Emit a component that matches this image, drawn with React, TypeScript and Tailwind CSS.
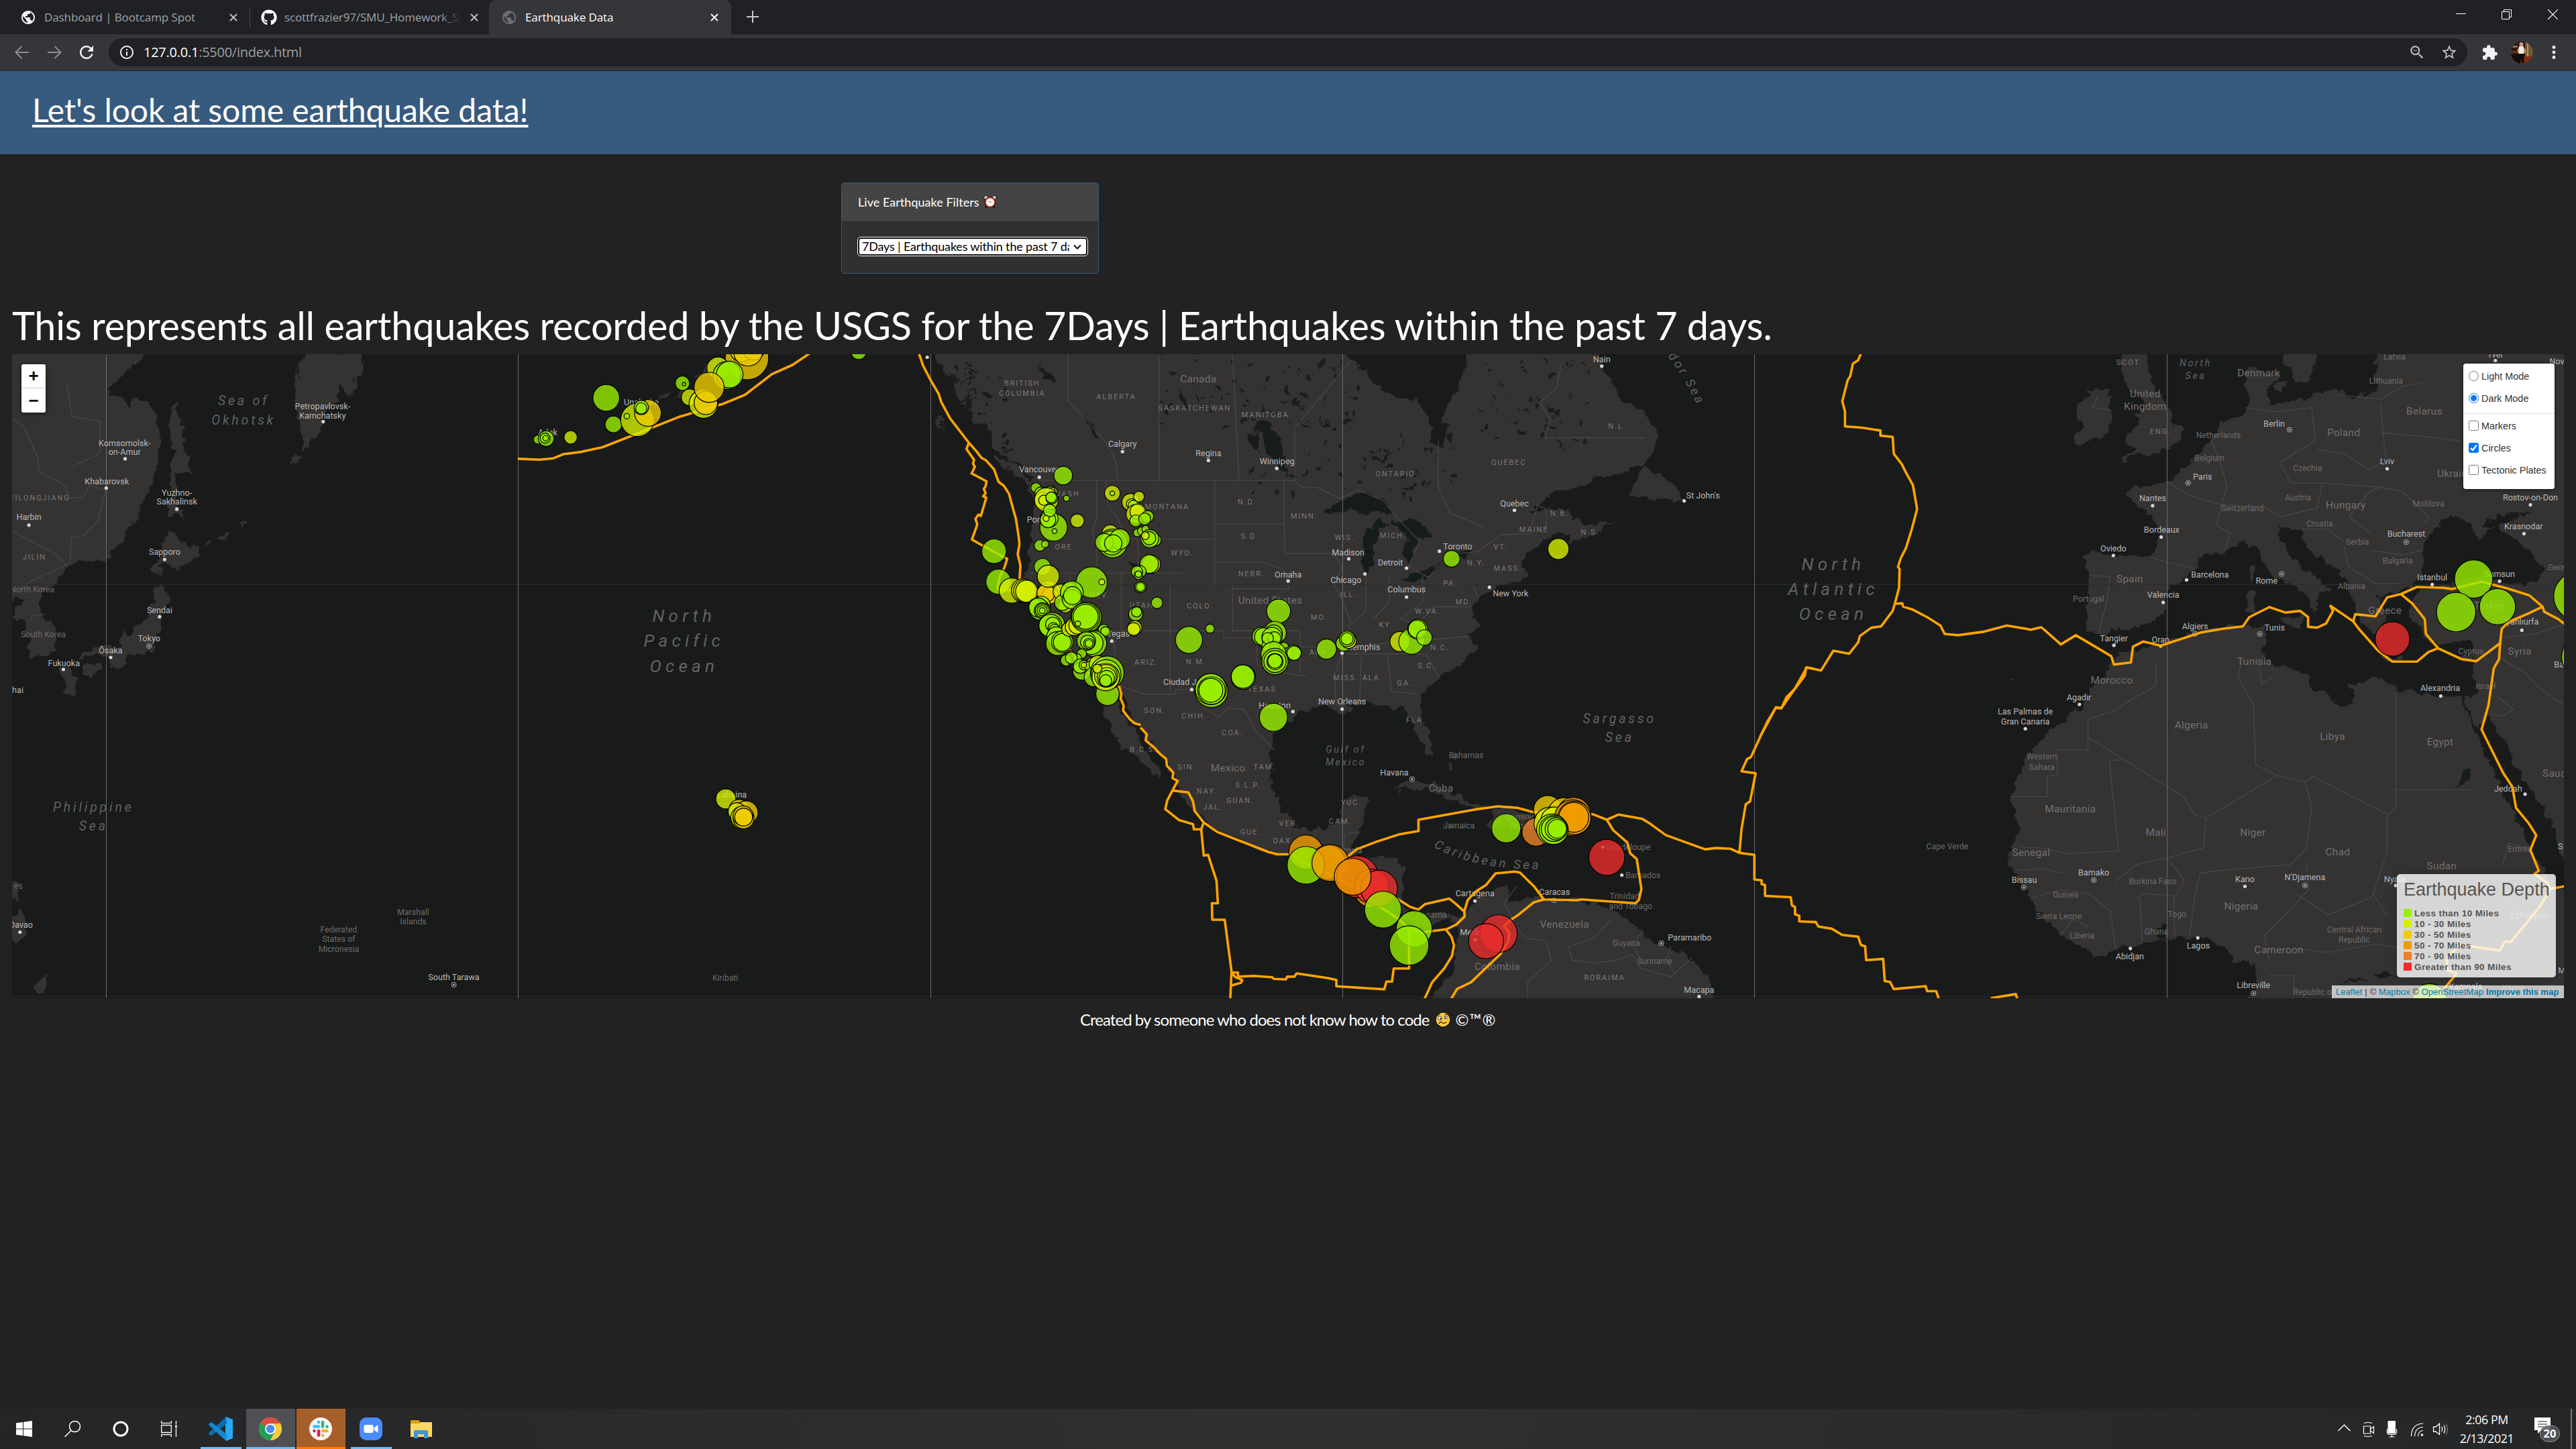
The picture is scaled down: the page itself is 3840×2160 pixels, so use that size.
import React from "react";
import { FaGithub } from "react-icons/fa";
import { MdExtension, MdStarBorder, MdZoomOut, MdInfoOutline, MdRefresh, MdPublic } from "react-icons/md";

/* ---------- map geometry ---------- */

// A sheet is a local drafting grid: origin and cell size in page units.
type Sheet = { x: number; y: number; sx: number; sy: number };
const PACIFIC: Sheet = { x: 0, y: 430, sx: 0.82908, sy: 0.6824 };
const WEST: Sheet = { x: 1280, y: 520, sx: 0.44643, sy: 0.35714 };
const CARIB: Sheet = { x: 1700, y: 860, sx: 0.63776, sy: 0.40816 };
const EAST: Sheet = { x: 2600, y: 520, sx: 0.79082, sy: 0.625 };
const AMERICA: Sheet = { x: 1300, y: 500, sx: 0.82908, sy: 0.66327 };

const pts = (s: Sheet, d: string) =>
  d
    .trim()
    .split(/\s+/)
    .map((p) => {
      const [a, b] = p.split(",").map(Number);
      return `${(s.x + a * s.sx).toFixed(1)},${(s.y + b * s.sy).toFixed(1)}`;
    })
    .join(" ");

const LAND: [Sheet, string][] = [
  // East Asia
  [PACIFIC, "-10,130 266,130 258,144 240,168 218,192 194,222 200,238 222,236 232,262 240,240 262,246 285,280 288,320 282,400 262,455 240,510 215,560 190,595 170,600 150,588 128,598 110,625 98,650 78,660 70,680 75,712 96,742 100,760 98,790 78,800 52,808 55,770 48,745 38,725 25,720 28,700 42,682 30,678 20,690 -10,700"],
  [PACIFIC, "315,250 326,290 330,345 345,412 320,402 316,460 334,508 318,490 302,498 308,440 306,400 312,350 300,300"],
  [PACIFIC, "305,525 335,565 355,562 362,578 330,598 325,616 295,598 285,606 291,630 274,616 276,600 290,590 292,560"],
  [PACIFIC, "278,652 296,648 305,682 288,712 288,766 276,775 276,795 250,800 232,805 214,832 200,828 200,806 170,800 140,812 148,795 182,784 212,780 222,745 232,756 262,722 275,690"],
  [PACIFIC, "104,826 125,828 138,852 132,888 114,880 118,850"],
  [PACIFIC, "148,838 152,822 180,815 184,828 158,850"],
  [PACIFIC, "552,140 536,170 530,200 534,270 546,356 574,310 580,276 604,250 606,212 634,238 640,190 656,180 648,140"],
  [PACIFIC, "524,386 534,364 540,368 530,382"],
  [PACIFIC, "20,1380 36,1352 48,1380 45,1410 30,1436 20,1420"],
  [PACIFIC, "20,1300 32,1296 34,1340 20,1336"],
  [PACIFIC, "66,1520 86,1495 78,1540 66,1535"],
  [PACIFIC, "701,210 712,235 706,222"],
  [PACIFIC, "372,562 376,552 380,556"],
  [PACIFIC, "392,545 410,528 416,532 398,546"],
  [PACIFIC, "430,520 442,503 444,510"],
  [PACIFIC, "1180,236 1205,226 1200,240"],
  [PACIFIC, "1208,236 1240,212 1232,232"],
  [PACIFIC, "1250,200 1280,152 1300,150 1282,186"],
  // North and Central America
  [AMERICA, "108,30 118,60 142,98 150,130 172,160 182,196 206,206 220,258 262,292 290,318 284,340 290,372 288,420 284,470 282,516 270,548 282,596 300,640 316,685 350,724 372,756 400,784 418,826 416,852 440,905 448,930 470,944 492,966 520,998 520,975 500,950 486,925 474,888 456,862 442,836 440,808 452,812 466,858 488,888 508,928 530,960 546,996 556,1040 590,1086 614,1112 672,1142 722,1166 760,1172 800,1192 842,1204 880,1244 908,1262 920,1290 948,1300 972,1322 988,1330 1012,1320 1040,1308 1056,1328 1050,1380 1048,1420 1024,1460 1004,1500 1515,1500 1502,1440 1480,1410 1452,1386 1402,1362 1374,1330 1350,1306 1320,1282 1300,1274 1262,1268 1220,1270 1196,1258 1160,1270 1140,1278 1146,1250 1138,1234 1112,1252 1090,1266 1080,1290 1056,1304 1020,1298 988,1312 968,1298 950,1266 956,1194 930,1172 880,1176 862,1164 864,1140 884,1098 892,1040 862,1036 848,1050 838,1096 796,1112 764,1108 740,1072 722,1026 716,960 722,892 750,866 780,840 814,832 850,852 868,838 846,828 900,826 948,838 966,852 978,890 994,940 1006,950 1008,930 998,880 984,840 988,806 1020,770 1056,740 1088,704 1074,670 1090,650 1078,620 1086,598 1112,570 1162,552 1180,540 1166,520 1180,490 1220,452 1256,442 1252,470 1280,458 1312,432 1340,414 1300,428 1260,412 1250,390 1210,392 1180,398 1220,360 1270,340 1310,316 1350,306 1388,290 1408,250 1412,220 1390,170 1350,150 1320,90 1300,30 1068,30 1068,70 1054,120 1026,180 1034,222 1024,252 1012,246 1002,196 978,142 936,136 910,112 888,80 866,60 850,30"],
  [AMERICA, "216,268 244,282 284,320 290,336 262,322 236,300"],
  [AMERICA, "112,180 132,190 130,214 118,206"],
  [AMERICA, "1392,286 1402,312 1440,330 1460,370 1442,378 1430,368 1404,366 1356,362 1370,338"],
  [CARIB, "590,778 604,760 646,744 700,764 746,800 776,826 812,834 782,846 728,818 700,800 680,778 632,768"],
  [CARIB, "806,908 826,870 826,842 868,846 918,880 940,900 900,912 866,904 836,916"],
  [CARIB, "706,906 730,904 740,918 720,918"],
  [CARIB, "726,660 736,640 740,664"],
  [CARIB, "720,684 732,680 734,700"],
  [CARIB, "598,784 612,786 606,800"],
  // Africa
  [EAST, "735,725 760,712 800,698 850,672 900,664 945,658 984,664 986,688 974,724 1000,754 1060,778 1070,806 1128,852 1150,832 1142,800 1196,784 1230,812 1290,822 1330,828 1352,832 1360,860 1384,930 1424,1040 1448,1100 1478,1180 1500,1230 1522,1270 1560,1300 1560,1560 950,1560 968,1500 966,1466 926,1462 910,1428 870,1402 800,1408 740,1420 704,1432 664,1452 606,1402 560,1354 530,1290 506,1240 498,1206 520,1150 514,1106 502,1070 524,1000 546,952 576,910 636,858 652,812 690,760 706,724"],
  // Arabia and the Levant
  [EAST, "1370,690 1380,820 1356,834 1374,886 1390,900 1400,870 1436,944 1456,1000 1490,1060 1516,1120 1534,1190 1560,1250 1560,600 1420,600"],
  // Europe and Anatolia
  [EAST, "1428,700 1404,686 1372,692 1336,700 1308,706 1284,690 1268,664 1256,620 1262,592 1290,572 1320,566 1360,548 1400,546 1440,562 1490,556 1510,530 1486,486 1450,450 1420,426 1450,404 1468,392 1440,396 1400,408 1392,424 1412,430 1388,452 1374,440 1372,420 1340,400 1316,410 1290,440 1276,486 1280,540 1254,566 1218,584 1192,592 1212,640 1196,690 1174,664 1150,620 1144,580 1136,556 1110,524 1070,484 1044,434 1010,424 1008,446 1030,500 1054,520 1098,566 1108,580 1084,574 1084,600 1070,632 1066,592 1030,560 1000,548 972,490 944,456 904,488 852,494 850,530 806,568 792,590 796,616 770,650 738,666 692,674 680,684 642,670 646,620 652,540 638,500 650,484 720,496 764,494 784,462 780,420 750,384 716,342 752,326 800,318 822,290 850,260 880,216 900,176 946,156 954,130 944,90 952,44 984,60 1012,56 986,96 992,132 1050,122 1110,90 1136,116 1192,100 1188,60 1196,0 1560,0 1560,720"],
  [EAST, "1018,0 1022,40 1044,78 1064,76 1078,30 1076,0"],
  [EAST, "1000,80 1020,76 1018,104 1002,100"],
  [EAST, "718,0 758,0 760,40 768,80 784,120 802,136 806,176 826,186 820,226 780,246 740,252 704,276 740,234 716,222 724,198 746,180 738,160 752,140 744,108 722,96 712,60 706,30"],
  [EAST, "624,150 640,112 664,92 690,106 692,180 684,206 634,226 620,214 640,186"],
  [EAST, "1012,642 1056,636 1050,668 1030,660"],
  [EAST, "946,578 964,572 962,626 948,634"],
  [EAST, "950,524 962,512 964,548 954,560"],
  [EAST, "1196,734 1240,738 1240,746 1200,744"],
  [EAST, "1346,738 1376,728 1368,744 1352,746"],
  [EAST, "500,786 508,788 504,792"],
  [EAST, "526,908 534,902 538,908"],
];

const WATER: [Sheet, string][] = [
  [AMERICA, "810,398 846,370 874,352 918,368 936,400 900,398 874,404 860,388 834,402"],
  [AMERICA, "912,412 934,424 914,434 902,470 904,510 890,536 880,508 886,458 898,428"],
  [AMERICA, "934,414 984,412 1006,450 990,462 980,450 976,482 966,514 954,488 962,452"],
  [AMERICA, "952,552 970,536 1000,524 1028,512 1002,540 972,554"],
  [AMERICA, "1026,498 1050,488 1078,480 1070,496 1036,504"],
  [AMERICA, "690,190 710,192 728,226 746,290 744,312 728,286 706,254"],
  [AMERICA, "676,218 690,222 694,262 686,250"],
  [AMERICA, "552,120 560,160 566,158 556,118"],
  [AMERICA, "380,180 396,200 412,232 404,228 388,206"],
  [AMERICA, "462,506 474,514 474,530 466,526"],
  [AMERICA, "298,64 312,94 330,108 322,88"],
  [AMERICA, "820,1180 828,1200 836,1196"],
  [EAST, "1186,1488 1210,1480 1230,1498 1200,1500"],
  [EAST, "1336,1056 1356,1008 1368,1006 1366,1030 1346,1042"],
  [EAST, "1440,420 1462,400 1480,390 1462,392"],
  [EAST, "1120,1512 1152,1500 1180,1506 1150,1508"],
  [EAST, "776,1380 796,1372 792,1410 782,1404"],
];

const BORDERS: [Sheet, string][] = [
  [AMERICA, "300,326 760,326 772,340 800,342 840,366 876,348 920,372 944,410 984,462 966,520 1000,544 1040,492 1090,486 1130,448 1182,446 1196,382 1212,390 1212,440"],
  [AMERICA, "352,42 352,146 384,190 420,240 438,280 442,326"],
  [AMERICA, "516,42 516,326"],
  [AMERICA, "648,42 660,326"],
  [AMERICA, "760,326 760,208 862,56"],
  [AMERICA, "404,326 404,410 396,440 404,480 404,534"],
  [AMERICA, "282,534 560,534"],
  [AMERICA, "420,326 424,380 440,410 460,456 478,458 616,458 616,326"],
  [AMERICA, "478,458 478,562"],
  [AMERICA, "616,458 616,560 478,560"],
  [AMERICA, "448,534 448,664 436,690"],
  [AMERICA, "356,534 356,590 434,682 440,770 450,792"],
  [AMERICA, "448,664 632,664 632,680 692,680 692,740 730,756 780,766"],
  [AMERICA, "536,560 536,800"],
  [AMERICA, "648,562 648,664 770,664 770,700"],
  [AMERICA, "616,424 740,424"],
  [AMERICA, "616,510 700,510 740,526 750,570 648,570"],
  [AMERICA, "740,326 742,490 830,490 846,520 832,560 846,600 860,640 850,700 832,760 834,830"],
  [AMERICA, "440,786 490,806 546,806 546,796 580,796 600,840 624,858 640,838 668,840 690,890 724,932"],
  [AMERICA, "770,760 770,700 852,700 1076,676"],
  [AMERICA, "852,716 996,716 1020,770"],
  [AMERICA, "880,716 876,830"],
  [AMERICA, "926,716 934,800 980,806"],
  [AMERICA, "888,530 888,620 860,650"],
  [AMERICA, "930,540 930,600 900,640"],
  [AMERICA, "990,540 990,600 950,636 980,650 1010,610 1076,610"],
  [AMERICA, "990,560 1080,560 1090,590"],
  [AMERICA, "1018,236 1018,340 1040,400 1100,430"],
  [AMERICA, "1210,230 1390,230"],
  [AMERICA, "1210,230 1220,190 1200,150 1230,120 1240,60"],
  [AMERICA, "796,1112 796,1160 846,1200 850,1120 876,1116"],
  [CARIB, "880,1130 850,1190 880,1280 900,1320 950,1330 960,1400 905,1480 905,1538"],
  [CARIB, "1100,1250 1060,1320 1000,1350 1010,1400 1060,1410 1110,1400 1150,1380 1170,1430 1240,1460 1290,1390"],
  [CARIB, "1170,1300 1150,1340 1170,1400"],
  [CARIB, "1240,1350 1230,1400 1250,1450"],
  [PACIFIC, "22,285 42,300 68,370 70,400 118,430 124,458 150,456 160,430 190,440 176,510 150,540 128,545 126,600 72,630 40,650"],
  [PACIFIC, "52,728 60,714 80,712"],
  [PACIFIC, "22,530 50,548 100,580 120,605"],
  [PACIFIC, "120,210 130,280 180,290 180,360 128,390"],
  [EAST, "776,750 776,804 728,838 700,862 648,884 648,956 590,956 590,1018 572,1018 572,1068 502,1068"],
  [EAST, "648,926 830,1070 848,1110 870,1120 1004,1018 964,992 960,850 930,780 940,740"],
  [EAST, "688,982 706,1198 608,1204 560,1190 520,1190"],
  [EAST, "688,982 712,980"],
  [EAST, "870,1120 866,1190 798,1214 740,1230 700,1270"],
  [EAST, "1004,1018 1056,1032 1072,1020 1212,1110 1212,1200 1186,1300 1210,1350"],
  [EAST, "1056,1032 1070,1090 1060,1190 1030,1230 900,1244 860,1250 850,1300 840,1400"],
  [EAST, "1228,820 1228,1098 1212,1110"],
  [EAST, "1228,1052 1370,1052"],
  [EAST, "968,740 976,800 998,780"],
  [EAST, "798,1214 830,1270 810,1310 812,1400"],
  [EAST, "740,1310 752,1300 810,1304"],
  [EAST, "746,1310 750,1420"],
  [EAST, "540,1310 600,1290 650,1300 690,1340 700,1430"],
  [EAST, "596,1400 620,1360 650,1380"],
  [EAST, "514,1244 560,1240 600,1250"],
  [EAST, "1060,1230 1064,1290 1020,1350 980,1400 990,1460"],
  [EAST, "1040,1300 1100,1350 1180,1310 1186,1300"],
  [EAST, "1040,1430 1100,1440 1190,1420 1240,1430"],
  [EAST, "990,1494 1036,1494 1036,1549"],
  [EAST, "1430,1230 1440,1180 1480,1190"],
  [EAST, "650,540 690,544 684,600 668,680"],
  [EAST, "764,496 800,510 850,524"],
  [EAST, "800,320 840,350 900,372 890,420 916,440 906,480"],
  [EAST, "880,216 900,280 910,330 900,372 980,376 1010,400 1080,380 1090,320"],
  [EAST, "944,140 1000,150 1070,140 1076,220 1010,270 1030,320 1090,320 1200,330"],
  [EAST, "1080,240 1130,250 1180,290 1210,260 1204,200 1200,130"],
  [EAST, "1200,200 1290,210 1350,220"],
  [EAST, "1120,110 1200,120 1240,90 1280,80"],
  [EAST, "1200,330 1240,340 1290,400 1282,420"],
  [EAST, "1180,440 1140,400 1180,340 1200,330"],
  [EAST, "1180,480 1240,492 1280,480"],
  [EAST, "1130,470 1140,520 1190,560 1240,560"],
  [EAST, "1040,430 1100,430 1130,460"],
  [EAST, "1428,690 1490,680 1540,660"],
  [EAST, "1420,730 1440,750 1470,770 1500,810 1545,850"],
  [EAST, "1420,830 1450,860 1430,876 1404,870"],
  [EAST, "668,110 656,140 690,146"],
];

const PLATES: [Sheet, string][] = [
  [PACIFIC, "931,372 970,374 995,371 1013,362 1045,357 1083,347 1150,315 1222,280 1245,272 1300,252 1340,232 1388,187 1425,167 1453,144 1470,130"],
  [WEST, "200,15 215,70 240,130 268,190 275,220 305,290 368,392 395,430 410,455 425,465 452,503 467,555 485,572 502,605 515,665 525,710 535,790 537,815 531,857 540,905 537,970"],
  [WEST, "368,392 360,418 385,463 382,480 388,492 377,520 427,553 424,572 418,585 424,603 416,615 426,622 408,698 400,692 390,710 396,733 378,796 412,820 496,877 486,915 470,955 463,1005 560,1012 640,1130 710,1265 800,1380 870,1410 877,1440 875,1460 885,1490 883,1510 905,1545 920,1562 942,1570"],
  [CARIB, "0,550 15,575 12,597 30,620 45,645 60,665 62,690 77,715 75,735 87,745 75,780 112,787 123,820 127,855 148,897 180,932 300,1005 320,1013 355,1013 387,1045 500,1130 560,1205 600,1245 628,1285"],
  [CARIB, "600,1175 630,1205 650,1215 665,1195 722,1175 738,1195 757,1222 758,1240 738,1270 715,1287 660,1298 628,1285 628,1430 592,1430 588,1478 575,1478 570,1506 458,1495 458,1472 438,1465 365,1448 360,1460 343,1460 340,1470 312,1468 308,1462 265,1457 228,1460 228,1445 213,1445"],
  [CARIB, "75,780 63,815 58,848 90,888 123,903 125,922 142,922 148,1018 158,1015 178,1110 181,1192 167,1192 168,1252 197,1252 213,1440 210,1545"],
  [CARIB, "142,922 148,897"],
  [CARIB, "213,1445 222,1462 238,1472 235,1482 213,1492"],
  [CARIB, "715,1290 727,1315 733,1345 728,1385 710,1430 682,1480 663,1545"],
  [CARIB, "470,1050 487,1018 505,995 550,968 605,940 650,928 650,887 780,850 835,838 880,843 920,860 1010,850 1058,867 1090,887 1117,868 1172,883 1190,900 1228,943 1320,995 1345,990 1380,993 1400,1008 1435,1015 1435,1105 1452,1108 1452,1122 1460,1125 1460,1165 1520,1170 1523,1200 1530,1205 1530,1232 1540,1238 1540,1258 1568,1260"],
  [CARIB, "1090,887 1105,925 1138,970 1145,1010 1160,1030 1171,1140 1165,1180 1157,1192 1030,1178 1020,1181 943,1178 920,1130 887,1080 875,1076 830,1083 808,1125 785,1148 765,1180 757,1222"],
  [CARIB, "943,1178 920,1188 885,1232 868,1250 850,1275 862,1300 860,1330 843,1375 773,1480 740,1505 725,1545"],
  [CARIB, "1400,1008 1405,920 1415,830 1425,820 1438,717 1405,710 1418,665 1427,658 1450,580 1465,530 1485,478 1498,480 1510,440 1532,405 1553,360 1556,330 1573,335"],
  [EAST, "222,5 215,27 205,35 200,65 195,75 185,125 190,150 190,185 222,188 257,195 257,207 280,210 282,250 297,275 305,295 318,325 326,382 316,430 305,475 295,500 290,520 293,525 292,570 284,608 280,625 258,662 240,665 218,685 215,700 198,727 168,720 145,767 118,760 95,812 70,857 60,855 45,890 30,925"],
  [EAST, "284,608 298,607 300,615 318,622 345,640 370,660 378,680 403,683 450,675 495,660 533,668 540,670 560,664 597,705 625,683 692,733 697,753 729,748 733,710 752,698 785,708 860,677 900,668 940,662 952,640 990,616 1020,629 1048,625 1063,640 1063,663 1080,665 1097,655 1110,625 1105,613 1148,650 1152,633 1190,638 1212,593 1238,585 1268,568 1318,570 1335,573 1390,555 1440,572 1480,588 1505,615 1508,627 1535,645 1548,658"],
  [EAST, "1505,615 1480,630 1440,652 1428,668 1425,702 1380,745 1352,740 1308,714 1285,680 1283,645 1260,608 1238,585"],
  [EAST, "1308,714 1290,723 1268,746 1222,746 1195,720 1160,670 1148,650"],
  [EAST, "1425,702 1423,740 1413,762 1403,850 1390,908 1430,1010 1448,1045 1455,1095 1478,1130 1493,1160 1482,1195 1498,1245 1490,1252 1515,1275 1520,1288 1550,1281"],
  [EAST, "1520,1288 1500,1330 1445,1415 1435,1413 1424,1435 1350,1422 1325,1450 1325,1482 1343,1490 1320,1525 1300,1555"],
  [EAST, "126,1367 135,1367 140,1378 165,1383 185,1398 215,1402 220,1422 228,1425 230,1458 262,1455 265,1508 275,1510 282,1527 342,1520 345,1532 362,1532 368,1555"],
  [EAST, "465,1549 512,1539 516,1555"],
];

const G = "#98ee00";
const Y = "#d4ee00";
const A = "#eecc00";
const O = "#ee9c00";
const D = "#ea822c";
const R = "#ea2c2c";

const QUAKES: [Sheet, string, string][] = [
  [PACIFIC, G, "1090,239,24 1103,297,15 967,330,8 982,328,14 980,327,9 981,327,5"],
  [PACIFIC, Y, "1026,325,12 1146,287,30"],
  [PACIFIC, A, "1165,272,24"],
  [PACIFIC, G, "1153,260,13 1153,262,10 1127,279,5 1227,207,13 1230,209,3"],
  [PACIFIC, Y, "1240,238,15 1265,252,26"],
  [PACIFIC, A, "1269,250,21 1343,152,39"],
  [PACIFIC, Y, "1291,174,20 1333,136,20"],
  [PACIFIC, G, "1307,190,25 1312,188,24"],
  [PACIFIC, A, "1275,216,27 1355,132,20 1345,138,26"],
  [PACIFIC, G, "1544,138,14"],
  [PACIFIC, Y, "1305,1115,18"],
  [PACIFIC, A, "1329,1138,18 1342,1145,21"],
  [PACIFIC, Y, "1325,1143,16 1334,1156,20"],
  [PACIFIC, A, "1337,1157,19 1336,1152,18 1337,1155,16"],
  [WEST, G, "683,529,31 592,580,17 610,605,23 642,600,22"],
  [WEST, Y, "646,589,9 612,632,26 627,630,40 618,632,17"],
  [WEST, G, "694,624,10 645,622,20 643,620,18 651,745,46 636,708,30 632,714,26 638,675,21 654,761,8"],
  [WEST, Y, "626,708,10 730,718,23 847,603,26"],
  [WEST, G, "847,603,8 605,821,19 623,815,12"],
  [WEST, Y, "908,640,29 912,648,18 936,617,18"],
  [WEST, G, "917,653,17"],
  [WEST, Y, "925,690,32 932,680,26"],
  [WEST, G, "965,700,20 925,718,20 955,710,20 930,768,13 945,760,14 958,752,12"],
  [WEST, Y, "840,770,28"],
  [WEST, G, "848,812,48 845,810,40 872,794,34 820,808,30 850,812,29 990,798,20 972,792,30 970,790,22"],
  [WEST, Y, "957,780,13 977,899,31"],
  [WEST, G, "970,898,31 940,930,20 929,930,19 934,945,14 934,940,11 941,994,20 941,994,12 941,994,16 996,1060,19 925,1106,24 928,1098,17"],
  [WEST, Y, "922,1164,24 918,1170,22"],
  [WEST, G, "452,845,41 467,972,42"],
  [WEST, Y, "511,1009,42 550,1009,40 555,1010,38 561,1012,37"],
  [WEST, G, "614,910,28 700,1020,36"],
  [WEST, A, "635,1015,38 640,1030,28 625,1020,30"],
  [WEST, Y, "633,949,37 690,1072,24 675,1014,26"],
  [WEST, G, "778,975,52 680,1060,26 712,1017,38 712,1045,32 714,1030,30"],
  [WEST, Y, "812,973,10"],
  [WEST, G, "610,1070,30 605,1090,34 590,1070,22 600,1080,32 613,1093,27 613,1093,23 613,1093,17 613,1093,10"],
  [WEST, G, "645,1155,44 640,1155,38 648,1150,24 650,1165,18 655,1175,20 660,1200,32 665,1230,40 680,1223,36 680,1225,30"],
  [WEST, Y, "702,1170,24 720,1160,30 730,1155,28"],
  [WEST, G, "760,1120,51 758,1118,47 758,1118,42 732,1147,9 818,1172,18 824,1180,16 785,1230,43 778,1228,38 760,1220,31 765,1225,24 769,1230,18 769,1230,13"],
  [WEST, O, "710,1265,5"],
  [WEST, G, "745,1272,16 730,1290,14 693,1300,19 710,1290,20 745,1345,30 740,1325,24 752,1320,16 780,1310,18 770,1325,16"],
  [WEST, Y, "752,1320,9 798,1315,28"],
  [WEST, G, "785,1370,32 831,1440,39 830,1352,56 826,1360,50"],
  [WEST, Y, "825,1370,46 826,1365,38"],
  [WEST, G, "828,1370,32 828,1375,26 825,1385,20"],
  [WEST, Y, "797,1335,15"],
  [WEST, G, "1103,1215,45 1173,1168,15 1178,1428,55 1176,1420,52 1178,1426,46 1176,1425,40 1284,1370,41 1283,1368,39 1385,1538,47 1402,1095,40"],
  [WEST, G, "1390,1185,38 1385,1190,30 1345,1200,31 1352,1202,30 1380,1205,34 1366,1240,20 1391,1240,18 1420,1245,16 1388,1208,22 1366,1208,19 1430,1268,16 1452,1268,26 1454,1270,24 1385,1275,42 1390,1305,44 1390,1305,37 1390,1305,27 1390,1303,24"],
  [AMERICA, G, "817,705,18 848,692,14"],
  [AMERICA, Y, "857,686,14 949,688,18"],
  [AMERICA, G, "854,682,14 854,682,11 970,688,23 981,660,18 980,660,16 993,679,14 1042,502,15"],
  [AMERICA, Y, "1234,480,19"],
  [CARIB, G, "855,918,34"],
  [CARIB, D, "925,932,33"],
  [CARIB, A, "952,850,33 990,866,38"],
  [CARIB, Y, "958,900,38 968,890,32"],
  [CARIB, O, "1013,868,40 1010,880,42 1014,880,39 1013,878,35"],
  [CARIB, G, "962,922,36 966,924,34 966,921,29 972,920,26 974,920,22"],
  [CARIB, R, "1090,1024,42"],
  [CARIB, O, "387,1005,40 438,1042,40"],
  [CARIB, G, "387,1053,44"],
  [CARIB, O, "444,1045,43 540,1145,40"],
  [CARIB, R, "507,1095,49 540,1130,40 558,1138,43"],
  [CARIB, O, "496,1095,43"],
  [CARIB, G, "567,1215,43 640,1285,42 628,1346,46"],
  [CARIB, R, "837,1303,44 808,1330,41"],
  [EAST, G, "1375,549,36 1342,628,37 1420,615,34 1572,590,46 1586,735,45 1292,1556,33"],
  [EAST, R, "1222,692,32.5"],
];

type Kind = "city" | "state" | "country" | "small" | "sea" | "ocean";
const KIND: Record<Kind, string> = {
  city: "fill-[#b8b8b8] text-[12.6px]",
  state: "fill-[#7a7a7a] text-[11px] tracking-[1.9px]",
  country: "fill-[#717171] text-[15.4px] tracking-[0.3px]",
  small: "fill-[#6c6c6c] text-[12.3px]",
  sea: "fill-[#606363] text-[19.5px] italic tracking-[3.8px]",
  ocean: "fill-[#606363] text-[26px] italic tracking-[6.200px]",
};

// Entries are "text@x,y" with the centre of the text in sheet units.
const LABELS: [Sheet, Kind, string][] = [
  [PACIFIC, "sea", "Sea of@438,246|Okhotsk@438,288|Philippine@168,1134|Sea@168,1175"],
  [PACIFIC, "ocean", "North@1230,715|Pacific@1230,770|Ocean@1230,825"],
  [PACIFIC, "city", "Petropavlovsk-@580,257|Kamchatsky@580,277|Komsomolsk-@224,338|on-Amur@224,357|Khabarovsk@192,421|Yuzhno-@318,446|Sakhalinsk@318,466|Harbin@52,499|Sapporo@296,575|Sendai@287,702|Tokyo@268,764|Ōsaka@199,790|Fukuoka@115,818|hai@32,877|Davao@38,1390|South Tarawa@816,1504|Lahaina@1316,1106|Adak@985,315|Unalaska@1153,248"],
  [PACIFIC, "small", "North Korea@58,658|South Korea@78,756|es@33,1305|Marshall@743,1363|Islands@743,1384|Federated@609,1401|States of@609,1422|Micronesia@609,1443|Kiribati@1304,1506"],
  [PACIFIC, "state", "HEILONGJIANG@66,458|JILIN@62,587"],
  [WEST, "state", "BRITISH@546,144|COLUMBIA@546,185|ALBERTA@860,200|SASKATCHEWAN@1122,248|MANITOBA@1358,277|WASH.@700,605|MONTANA@1030,660|N.D.@1297,640|MINN.@1488,700|S.D.@1306,782|ORE.@690,827|WYO.@1080,853|NEBR.@1312,940|NEV.@805,1030|UTAH@945,1070|COLO.@1140,1073|MO.@1538,1122|ARIZ.@961,1310|N.M.@1127,1305|TEXAS@1347,1420|SON.@989,1512|CHIH.@1121,1533"],
  [WEST, "city", "Calgary@881,396|Regina@1168,436|Winnipeg@1397,470|Vancouver@602,503|Portland@615,714|Omaha@1434,942|Las Vegas@840,1188|Ciudad J.@1076,1391|Houston@1389,1488"],
  [WEST, "country", "Canada@1134,125|United States@1374,1051"],
  [AMERICA, "city", "Nain@1312,54|St John's@1494,359|Quebec@1155,377|Toronto@1053,474|Detroit@932,510|Madison@856,488|Chicago@852,550|Columbus@961,570|New York@1148,580|Memphis@882,700|New Orleans@845,823|Havana@939,983|Cartagena@1084,1254|Caracas@1227,1251|Medellín@1086,1341|Paramaribo@1470,1353|Macapa@1487,1471"],
  [AMERICA, "state", "N.L.@1340,204|QUÉBEC@1145,286|ONTARIO@941,312|N.B.@1236,400|MAINE@1190,436|N.S.@1291,442|MICH.@937,450|WIS.@850,455|VT.@1130,475|N.Y.@1086,512|MASS.@1143,524|PA.@1040,557|MD.@1064,600|ILL.@857,582|W.VA.@999,620|KY.@924,651|N.C.@1021,702|ARK.@805,713|S.C.@997,743|MISS.@852,769|ALA.@900,769|GA.@958,782|FLA.@978,864|COA.@648,894|B.C.S.@488,931|SIN.@566,970|TAM.@706,970|S.L.P.@676,1011|NAY.@602,1025|GUAN.@662,1046|JAL.@613,1061|VER.@750,1097|GUE.@681,1116|YUC.@862,1050|CAM.@842,1093|OAX.@740,1136|RORAIMA@1317,1444"],
  [AMERICA, "small", "Bahamas@1068,944|Jamaica@1055,1102|Dominican@1174,1082|Republic@1174,1102|Guatemala@845,1158|Guadeloupe@1360,1150|Barbados@1386,1214|Trinidad@1353,1261|and Tobago@1364,1283|Panama@1006,1302|Guyana@1356,1366|Suriname@1407,1406"],
  [AMERICA, "country", "Mexico@640,972|Cuba@1023,1017|Venezuela@1245,1323|Colombia@1124,1418"],
  [AMERICA, "sea", "Sargasso@1344,861|Sea@1344,904"],
  [EAST, "ocean", "North@168,513|Atlantic@168,573|Ocean@168,632"],
  [EAST, "country", "Denmark@970,57|United@756,107|Kingdom@756,138|Belarus@1282,149|Poland@1130,200|Ukraine@1340,297|Hungary@1134,372|Spain@727,548|Greece@1208,624|Turkey@1405,612|Syria@1462,721|Tunisia@962,745|Morocco@693,791|Algeria@843,898|Libya@1109,925|Egypt@1312,938|Mauritania@615,1098|Mali@776,1154|Niger@959,1153|Chad@1119,1200|Senegal@541,1202|Sudan@1315,1234|Nigeria@937,1329|Cameroon@1008,1434|Ethiopia@1480,1351|Saudi@1530,1013"],
  [EAST, "small", "Latvia@1226,19|Lithuania@1210,77|Netherlands@894,207|Belgium@877,261|Czechia@1062,284|Austria@1044,355|Switzerland@939,381|Croatia@1085,417|Moldova@1290,369|Serbia@1156,461|Bulgaria@1232,506|Albania@1145,567|Portugal@649,597|Cyprus@1370,721|Israel@1398,805|Georgia@1542,522|Western@561,972|Sahara@561,998|Cape Verde@383,1187|Burkina Faso@770,1270|Guinea@606,1303|Sierra Leone@593,1353|Liberia@637,1400|Togo@816,1349|Ghana@777,1390|Eritrea@1462,1193|Central African@1150,1385|Republic@1150,1409|Republic of@1074,1534|South Sudan@1320,1380|Kenya@1450,1524"],
  [EAST, "city", "Berlin@999,178|Paris@864,305|Lviv@1212,268|Nantes@770,356|Bordeaux@787,431|Oviedo@696,476|Barcelona@878,538|Valencia@790,587|Rome@985,552|Bucharest@1248,441|Istanbul@1297,544|Samsun@1424,536|Rostov-on-Don@1482,354|Krasnodar@1469,423|Algiers@850,661|Tunis@1000,665|Oran@785,693|Tangier@697,690|Agadir@631,831|Las Palmas de@530,865|Gran Canaria@530,888|Şanlıurfa@1466,651|Alexandria@1312,809|Jeddah@1440,1049|Ba@1536,753|S@1539,1187|Bamako@659,1248|Bissau@528,1266|Kano@944,1264|N'Djamena@1057,1260|Nyala@1226,1264|Abidjan@727,1448|Lagos@856,1423|Libreville@960,1518|Kampala@1360,1520|M@1541,1482|Nov@1532,30|Tver@1416,14"],
  [EAST, "state", "SCOT.@726,33|ENG.@785,198"],
];

const DOTS: [Sheet, string][] = [
  [PACIFIC, "581,291 225,372 191,436 318,482 52,517 296,592 287,717 199,806 114,832 36,1406"],
  [WEST, "229,35 881,429 1168,466 1396,499 603,536 1434,969 845,1220 1112,1422 1450,1514"],
  [AMERICA, "1312,69 1460,372 1155,393 1020,485 961,523 857,502 886,536 961,588 1110,566 845,714 845,840 1084,1271 1084,1358 1348,1213 1314,1150 1487,1486"],
  [EAST, "770,374 786,449 696,493 834,551 790,605 1212,286 1297,562 1424,554 1482,372 1470,441 697,707 785,709 632,848 530,906 1466,671 1313,828 1472,1062 944,1282 728,1430 855,1405 1228,1280 1416,28"],
];
const RINGS: [Sheet, string][] = [
  [PACIFIC, "268,781 816,1521"],
  [AMERICA, "971,997 1226,1270 1419,1366"],
  [EAST, "1028,193 837,320 1013,537 1248,461 850,680 972,680 659,1267 527,1285 1057,1280 960,1537"],
];

const LAKES = (() => {
  let seed = 7;
  const rnd = () => {
    seed = (seed * 16807) % 2147483647;
    return seed / 2147483647;
  };
  const zones: [number, number, number, number, number][] = [
    [1730, 530, 300, 110, 80],
    [1860, 640, 270, 110, 45],
    [2200, 535, 170, 140, 55],
    [2050, 650, 130, 80, 18],
    [1420, 560, 90, 160, 50],
    [1395, 540, 60, 120, 90],
    [1480, 700, 60, 60, 20],
  ];
  return zones.flatMap(([x, y, w, h, n]) =>
    Array.from({ length: n }, () => ({
      x: x + rnd() * w,
      y: y + rnd() * h,
      rx: 0.8 + rnd() * 4.4,
      ry: 0.8 + rnd() * 3,
      a: rnd() * 180,
    })),
  );
})();

function WorldMap() {
  return (
    <svg className="block h-[960px] w-[3804px]" viewBox="18 528 3804 960" fontFamily='Roboto, "Noto Sans", sans-serif'>
      <defs>
        <filter id="coast" x="0" y="0" width="100%" height="100%">
          <feTurbulence type="fractalNoise" baseFrequency="0.07" numOctaves="4" seed="4" result="n" />
          <feDisplacementMap in="SourceGraphic" in2="n" scale="16" xChannelSelector="R" yChannelSelector="G" />
        </filter>
        <path id="caribbean" d="M2137,1263 Q2215,1302 2316,1294" />
        <path id="labrador" d="M2478,520 Q2510,560 2534,612" />
      </defs>
      <rect x="18" y="528" width="3804" height="960" fill="#191a1a" />
      <g filter="url(#coast)">
        {LAND.map(([s, d], i) => (
          <polygon key={i} points={pts(s, d)} fill="#343332" />
        ))}
        {WATER.map(([s, d], i) => (
          <polygon key={i} points={pts(s, d)} fill="#191a1a" />
        ))}
        {LAKES.map((l, i) => (
          <ellipse key={i} rx={l.rx} ry={l.ry} transform={`translate(${l.x} ${l.y}) rotate(${l.a})`} fill="#1c1d1d" />
        ))}
      </g>
      {BORDERS.map(([s, d], i) => (
        <polyline key={i} points={pts(s, d)} fill="none" stroke="#4b4b4a" strokeWidth="1.1" />
      ))}
      {[871, 1485].map((y) => (
        <rect key={y} x="18" y={y} width="3804" height="1" fill="#2b2c2c" />
      ))}
      {[158, 772, 1387, 2001, 2615, 3230].map((x) => (
        <rect key={x} x={x} y="528" width="1" height="960" fill="#6a6b6b" />
      ))}
      {LABELS.map(([s, k, list], i) => (
        <g key={i} className={KIND[k]} textAnchor="middle">
          {list.split("|").map((e) => {
            const [t, p] = e.split("@");
            const [a, b] = p.split(",").map(Number);
            return (
              <text key={e} x={s.x + a * s.sx} y={s.y + b * s.sy} dominantBaseline="central">
                {t}
              </text>
            );
          })}
        </g>
      ))}
      <g className="fill-[#606363] text-[14.4px] italic tracking-[2.5px]" textAnchor="middle" dominantBaseline="central">
        <text x="2006" y="1117">Gulf of</text>
        <text x="2006" y="1136">Mexico</text>
        <text x="3273" y="541">North</text>
        <text x="3273" y="560">Sea</text>
      </g>
      <g className="fill-[#606363] text-[18.5px] italic tracking-[3.8px]">
        <text>
          <textPath href="#caribbean">Caribbean Sea</textPath>
        </text>
        <text>
          <textPath href="#labrador">ador Sea</textPath>
        </text>
      </g>
      {DOTS.flatMap(([s, d]) => pts(s, d).split(" ")).map((p) => (
        <circle key={p} cx={p.split(",")[0]} cy={p.split(",")[1]} r="2.6" fill="#d6d6d6" />
      ))}
      {RINGS.flatMap(([s, d]) => pts(s, d).split(" ")).map((p) => (
        <g key={p} fill="none" stroke="#b0b0b0">
          <circle cx={p.split(",")[0]} cy={p.split(",")[1]} r="3.6" />
          <circle cx={p.split(",")[0]} cy={p.split(",")[1]} r="1.2" fill="#b0b0b0" />
        </g>
      ))}
      {PLATES.map(([s, d], i) => (
        <polyline key={i} points={pts(s, d)} fill="none" stroke="#ffa500" strokeWidth="3.6" strokeLinejoin="round" />
      ))}
      {QUAKES.flatMap(([s, c, list], i) =>
        list.split(" ").map((e, j) => {
          const [a, b, r] = e.split(",").map(Number);
          return (
            <circle key={`${i}-${j}`} cx={s.x + a * s.sx} cy={s.y + b * s.sy} r={r * s.sx} fill={c} fillOpacity="0.8" stroke="#000" strokeWidth="1.2" />
          );
        }),
      )}
    </svg>
  );
}

/* ---------- browser chrome ---------- */

const TabClose = ({ on = false }: { on?: boolean }) => (
  <svg className="h-3 w-3 shrink-0" viewBox="0 0 12 12">
    <path d="M1 1L11 11M11 1L1 11" stroke={on ? "#fff" : "#bdc1c6"} strokeWidth="1.9" />
  </svg>
);

function TabStrip() {
  return (
    <div className="flex h-[51px] bg-[#202124] text-[17px] text-[#9fa3a8]">
      <div className="flex w-[372px] items-center pl-[30px] pr-[18px]">
        <MdPublic className="h-6 w-6 shrink-0 text-[#f1f3f4]" />
        <span className="ml-3 grow whitespace-nowrap tracking-[-0.1px]">Dashboard | Bootcamp Spot</span>
        <TabClose />
      </div>
      <div className="my-[10px] w-px bg-[#4a4c50]" />
      <div className="flex w-[356px] items-center pl-4 pr-[16px]">
        <FaGithub className="h-6 w-6 shrink-0 text-white" />
        <div className="relative ml-[11px] w-[264px] overflow-hidden whitespace-nowrap tracking-[-0.15px]">
          scottfrazier97/SMU_Homework_Sp
          <div className="absolute inset-y-0 right-0 w-8 bg-gradient-to-r from-transparent to-[#202124]" />
        </div>
        <div className="ml-auto" />
        <TabClose />
      </div>
      <div className="flex w-[361px] items-center rounded-t-[10px] bg-[#35363a] pl-[18px] pr-[19px] text-white">
        <MdPublic className="h-6 w-6 shrink-0 text-[#6c6e72]" />
        <span className="ml-3 grow tracking-[-0.1px]">Earthquake Data</span>
        <TabClose on />
      </div>
      <svg className="ml-[23px] mt-4 h-[18px] w-[18px]" viewBox="0 0 18 18">
        <path d="M9 0V18M0 9H18" stroke="#c8cacd" strokeWidth="2" />
      </svg>
      <div className="ml-auto flex pr-[27px] pt-[14px]">
        <svg className="h-[15px] w-[155px]" viewBox="0 0 155 15" fill="none" stroke="#fff">
          <path d="M3 6.5H18" />
          <path d="M71.5 3.5h11v11h-11zM74.5 3.5v-3h11v11h-3" />
          <path d="M140 0L155 15M155 0L140 15" strokeWidth="1.2" />
        </svg>
      </div>
    </div>
  );
}

function Toolbar() {
  return (
    <div className="flex h-[55px] items-center border-b border-[#28292c] bg-[#35363a] pl-[21px]">
      <svg className="h-[22px] w-[72px]" viewBox="0 0 72 22" fill="none" stroke="#8b8d91" strokeWidth="2">
        <path d="M22 11H3M11.500 2L2.500 11L11.500 20" />
        <path d="M50 11H69M60.500 2L69.500 11L60.500 20" />
      </svg>
      <MdRefresh className="ml-[21px] h-[30px] w-[30px] text-[#f1f3f4]" />
      <div className="ml-[18px] flex h-[42px] w-[3516px] items-center rounded-full bg-[#202124] pl-[15px] pr-[14px]">
        <MdInfoOutline className="h-6 w-6 text-[#e8eaed]" />
        <span className="ml-[13px] text-[20px] leading-none tracking-[-0.25px] text-[#9aa0a6]">
          <span className="text-white">127.0.0.1</span>:5500/index.html
        </span>
        <MdZoomOut className="ml-auto h-[26px] w-[26px] text-[#bdbdbd]" />
        <MdStarBorder className="ml-[22px] h-[26px] w-[26px] text-[#c4c4c4]" />
      </div>
      <MdExtension className="ml-[21px] h-[25px] w-[25px] text-[#f1f3f4]" />
      <svg className="ml-[19px] h-[33px] w-[33px]" viewBox="0 0 33 33">
        <clipPath id="face">
          <circle cx="16.500" cy="16.500" r="16.500" />
        </clipPath>
        <g clipPath="url(#face)">
          <rect width="33" height="33" fill="#2a1a10" />
          <rect x="21" width="12" height="22" fill="#6e5836" />
          <rect x="24" y="2" width="2" height="20" fill="#b39a62" />
          <rect y="6" width="10" height="3" fill="#8a6a44" />
          <rect y="14" width="9" height="3" fill="#5c3c22" />
          <rect y="22" width="33" height="11" fill="#7a2f10" />
          <rect width="14" y="20" height="13" fill="#140c08" />
          <path d="M9 13L13 7H18L23 14L20 18H11Z" fill="#c98f6c" />
          <circle cx="15.500" cy="4" r="3" fill="#d49a78" />
          <rect x="12" y="7" width="7" height="12" fill="#eef0ee" />
          <path d="M11 18H20L19 32H16L15.500 24L14 32H12Z" fill="#0c0c0e" />
        </g>
      </svg>
      <svg className="ml-7 h-5 w-[6px]" viewBox="0 0 6 20" fill="#f1f3f4">
        <circle cx="3" cy="2.500" r="2.400" />
        <circle cx="3" cy="10" r="2.400" />
        <circle cx="3" cy="17.500" r="2.400" />
      </svg>
    </div>
  );
}

/* ---------- page pieces ---------- */

const AlarmClock = () => (
  <svg className="ml-[6px] h-5 w-5" viewBox="0 0 20 20">
    <circle cx="3.500" cy="3.500" r="3.400" fill="#222" />
    <circle cx="16.500" cy="3.500" r="3.400" fill="#222" />
    <circle cx="3.800" cy="3.500" r="2.500" fill="#ccc" />
    <circle cx="16.200" cy="3.500" r="2.500" fill="#ccc" />
    <path d="M5 16L3 19.500M15 16L17 19.500" stroke="#111" strokeWidth="2" />
    <circle cx="10" cy="10.500" r="8.300" fill="#111" />
    <circle cx="10" cy="10.500" r="7.600" fill="#e0381e" />
    <circle cx="10" cy="10.500" r="6" fill="#fff" />
    <path d="M7.500 8L10 10.500L12 9.800" fill="none" stroke="#444" />
  </svg>
);

const Woozy = () => (
  <svg className="ml-[8px] mr-[7px] h-[24px] w-[24px]" viewBox="0 0 24 24">
    <circle cx="12" cy="12" r="11" fill="#ffc83d" stroke="#111" strokeWidth="1.200" />
    <ellipse cx="7.500" cy="10" rx="3" ry="3" fill="#fff" stroke="#222" strokeWidth=".8" />
    <ellipse cx="16.500" cy="9" rx="3" ry="2" fill="#fff" stroke="#222" strokeWidth=".8" />
    <circle cx="8.500" cy="10.500" r="1.300" fill="#222" />
    <circle cx="16" cy="9" r="1.100" fill="#222" />
    <path d="M6 18q2.500-4 5-1.500t6.500-1.500" fill="none" stroke="#5a3a10" strokeWidth="1.600" />
    <path d="M4 6l4-2M14 4.500l5 .5" stroke="#5a3a10" strokeWidth="1.200" />
  </svg>
);

function FilterCard() {
  return (
    <div className="ml-[1254px] mt-[42px] h-[136px] w-[384px] overflow-hidden rounded-[5px] border border-[#375a7f] bg-[#303030]">
      <div className="flex h-[57px] items-center border-b border-[#3a3a3a] bg-[#444] pl-[24px] text-[18px] tracking-[0.04px] text-white">
        Live Earthquake Filters
        <AlarmClock />
      </div>
      <div className="ml-[23px] mt-[23px] flex h-[29px] w-[344px] items-center rounded-[5px] border border-white bg-[#101010] p-[2px]">
        <div className="flex h-full w-full items-center rounded-[2px] bg-white pl-1 text-[18px] tracking-[-0.17px] text-black">
          <div className="w-[309px] overflow-hidden whitespace-nowrap leading-[23px]">7Days | Earthquakes within the past 7 days</div>
          <svg className="ml-[6px] h-2 w-3" viewBox="0 0 12 8">
            <path d="M1 1.500L6 6.500L11 1.500" fill="none" stroke="#111" strokeWidth="2" />
          </svg>
        </div>
      </div>
    </div>
  );
}

const Radio = ({ on = false }: { on?: boolean }) => (
  <span className={`flex h-[15px] w-[15px] items-center justify-center rounded-full border ${on ? "border-[#0075ff]" : "border-[#767676]"}`}>
    {on && <span className="h-[9px] w-[9px] rounded-full bg-[#0075ff]" />}
  </span>
);
const Check = ({ on = false }: { on?: boolean }) => (
  <span className={`flex h-[15px] w-[15px] items-center justify-center rounded-[2.500px] border ${on ? "border-[#0075ff] bg-[#0075ff]" : "border-[#767676] bg-white"}`}>
    {on && (
      <svg className="h-[13px] w-[13px]" viewBox="0 0 13 13">
        <path d="M2 7L5 10L11 2.500" fill="none" stroke="#fff" strokeWidth="2.200" />
      </svg>
    )}
  </span>
);
const LayerRow = ({ mark, children }: { mark: React.ReactNode; children: string }) => (
  <div className="flex h-[33px] items-center gap-[4px] pl-2">
    {mark}
    <span className="whitespace-nowrap pt-[2px]">{children}</span>
  </div>
);

function LayerControl() {
  return (
    <div className="absolute right-[14px] top-[14px] h-[187px] w-[136px] rounded-[4px] bg-white pt-[2px] font-['Liberation_Sans',sans-serif] text-[14.4px] text-[#333] shadow-[0_1px_6px_rgba(0,0,0,0.5)]">
      <LayerRow mark={<Radio />}>Light Mode</LayerRow>
      <LayerRow mark={<Radio on />}>Dark Mode</LayerRow>
      <div className="mb-[1px] mt-[6px] h-px bg-[#ddd]" />
      <LayerRow mark={<Check />}>Markers</LayerRow>
      <LayerRow mark={<Check on />}>Circles</LayerRow>
      <LayerRow mark={<Check />}>Tectonic Plates</LayerRow>
    </div>
  );
}

const DEPTHS: [string, string][] = [
  ["bg-[#98ee00]", "Less than 10 Miles"],
  ["bg-[#d4ee00]", "10 - 30 Miles"],
  ["bg-[#eecc00]", "30 - 50 Miles"],
  ["bg-[#ee9c00]", "50 - 70 Miles"],
  ["bg-[#ea822c]", "70 - 90 Miles"],
  ["bg-[#ea2c2c]", "Greater than 90 Miles"],
];

function Legend() {
  return (
    <div className="absolute bottom-[31px] right-[12px] h-[154px] w-[237px] rounded-[5px] bg-white/80 pl-[10px] pt-[7px] font-['Liberation_Sans',sans-serif] text-[#555] shadow-[0_0_15px_rgba(0,0,0,0.2)]">
      <div className="whitespace-nowrap text-[27px] leading-[32px]">Earthquake Depth</div>
      <div className="mt-[12px] text-[13.6px] font-bold tracking-[0.35px]">
        {DEPTHS.map(([c, t]) => (
          <div key={t} className="flex h-4 items-center">
            <span className={`mb-[2px] h-3 w-3 ${c}`} />
            <span className="ml-1 whitespace-nowrap leading-4">{t}</span>
          </div>
        ))}
      </div>
    </div>
  );
}

function MapPanel() {
  return (
    <div className="relative ml-[18px] h-[960px] w-[3804px] overflow-hidden">
      <WorldMap />
      <div className="absolute left-[14px] top-[15px] flex h-[72px] w-[36px] flex-col rounded-[3px] bg-white font-['Liberation_Sans',sans-serif] text-[26px] font-bold text-black shadow-[0_1px_6px_rgba(0,0,0,0.65)]">
        <div className="flex h-9 items-center justify-center border-b border-[#ccc]">+</div>
        <div className="flex h-9 items-center justify-center">−</div>
      </div>
      <LayerControl />
      <Legend />
      <div className="absolute bottom-0 right-0 flex h-[19px] w-[346px] items-center whitespace-nowrap bg-white/70 pl-[6px] font-['Liberation_Sans',sans-serif] text-[13.1px] text-[#0078a8]">
        <span>Leaflet</span>
        <span className="mx-1 text-[#333]">|</span>
        <span className="text-[#333]">©&nbsp;</span>Mapbox
        <span className="text-[#333]">&nbsp;©&nbsp;</span>OpenStreetMap
        <b className="ml-1">Improve this map</b>
      </div>
    </div>
  );
}

/* ---------- taskbar ---------- */

function Taskbar() {
  return (
    <div className="flex h-[60px] items-center bg-gradient-to-r from-[#232527] via-[#303030] to-[#242628]">
      <svg className="ml-6 h-6 w-6" viewBox="0 0 24 24" fill="#fff">
        <path d="M0 3.300L10 2V11.400H0ZM11 1.800L24 0V11.400H11ZM0 12.600H10V22L0 20.700ZM11 12.600H24V24L11 22.200Z" />
      </svg>
      <svg className="ml-12 h-6 w-6" viewBox="0 0 24 24" fill="none" stroke="#fff" strokeWidth="1.500">
        <circle cx="15.500" cy="8.500" r="8" />
        <path d="M10 14.500L.5 24" />
      </svg>
      <svg className="ml-12 h-6 w-6" viewBox="0 0 24 24" fill="none" stroke="#fff" strokeWidth="3">
        <circle cx="12" cy="12" r="10" />
      </svg>
      <svg className="ml-12 h-6 w-6" viewBox="0 0 24 24" fill="none" stroke="#fff" strokeWidth="1.300">
        <path d="M.7 0V3.300H15.300V0M.7 24V20.700H15.300V24M.7 6.500H15.300V17.500H.7ZM22.500 0V6M22.500 11V24" />
        <rect x="21" y="7" width="3" height="3" fill="#fff" stroke="none" />
      </svg>
      <div className="ml-[35px] flex h-[60px] w-[61px] items-center justify-center border-b-[3px] border-[#76b9ed] pr-[2px] pt-[3px]">
        <svg className="h-9 w-9" viewBox="0 0 36 36">
          <path d="M26 0L36 4V32L26 36L25 34V2Z" fill="#2aa9f3" />
          <path d="M26 0L1 23Q-.5 24.500 1 26L3 27.500Q4 28.300 5.500 27.300L27 10Z" fill="#0a6db5" />
          <path d="M26 36L1 13Q-.5 11.500 1 10L3 8.500Q4 7.700 5.500 8.700L27 26Z" fill="#1687d2" />
        </svg>
      </div>
      <div className="ml-[7px] flex h-[60px] w-[73px] items-center justify-center border-b-[3px] border-[#76b9ed] bg-[#4e5053] pr-[1px] pt-[3px]">
        <svg className="h-[34px] w-[34px]" viewBox="0 0 34 34">
          <circle cx="17" cy="17" r="17" fill="#f9cb3e" />
          <path d="M17 17L2.300 8.500A17 17 0 0 1 31.700 8.500Z" fill="#db4a3e" />
          <path d="M17 17L2.300 8.500A17 17 0 0 0 17 34L24 21Z" fill="#219d58" />
          <path d="M17 9H31.900A17 17 0 0 1 17 34L24.500 20Z" fill="#f9cb3e" />
          <circle cx="17" cy="17" r="8" fill="#fff" />
          <circle cx="17" cy="17" r="6.200" fill="#4c8bf5" />
        </svg>
      </div>
      <div className="ml-[2px] flex h-[60px] w-[73px] items-center justify-center border-b-[3px] border-[#ff7b00] bg-[#a75f29] pr-[1px] pt-[3px]">
        <svg className="h-[34px] w-[34px]" viewBox="0 0 34 34" strokeLinecap="round" strokeWidth="4.600">
          <circle cx="17" cy="17" r="17" fill="#f7f7f7" />
          <path d="M14 7V7.100M7.500 13.500H14" stroke="#36c5f0" />
          <path d="M20 7V13.500M26.500 13.500V13.600" stroke="#2eb67d" />
          <path d="M20 20H26.500M20 26.500V26.600" stroke="#ecb22e" />
          <path d="M14 20V26.500M7.500 20V20.100" stroke="#e01e5a" />
        </svg>
      </div>
      <div className="ml-2 flex h-[60px] w-[61px] items-center justify-center border-b-[3px] border-[#76b9ed] pr-[1px] pt-[3px]">
        <svg className="h-[34px] w-[34px]" viewBox="0 0 34 34">
          <rect width="34" height="34" rx="10" fill="#4a8cff" />
          <rect x="6.500" y="11" width="14" height="12" rx="2.500" fill="#fff" />
          <path d="M21.500 15.500L27.500 11V23L21.500 18.500Z" fill="#fff" />
        </svg>
      </div>
      <svg className="ml-[28px] h-[27px] w-8" viewBox="0 0 32 27">
        <path d="M0 1Q0 0 1 0H12L14.500 3V6H0Z" fill="#dc9c10" />
        <path d="M0 5H13L15 3H31Q32 3 32 4V25H0Z" fill="#ffd766" />
        <path d="M5 27V17Q5 15 7 15H24Q26 15 26 17V27H20V21H11V27Z" fill="#3e94dd" />
      </svg>
      <div className="ml-auto flex h-[60px] items-center">
        <svg className="h-[26px] w-[166px]" viewBox="0 0 166 26" fill="none" stroke="#fff" strokeWidth="1.500">
          <path d="M.5 16L9.500 7L18.500 16" />
          <path d="M38.500 9H48.500V20H38.500ZM49 13L53.500 9.500V19.500L49 16M39 4.500Q45 2.500 51 4.500M39 23.500Q45 25.500 51 23.500" strokeWidth="1.200" />
          <rect x="74.500" y="1" width="11.500" height="19" rx="1" fill="#fff" stroke="none" />
          <path d="M73.500 13V18Q74 21.500 77 21.500H84Q87 21.500 87.500 18V13M80.500 21.500V25M76.500 25H84.500" strokeWidth="1.200" />
          <path d="M109.500 24Q109.500 6 127 5M114.500 24Q115 11 127 10.500M119.500 24Q120 16 127 15.500" strokeWidth="1.200" />
          <circle cx="125.500" cy="22" r="1.800" fill="#fff" stroke="none" />
          <path d="M142.500 10H146L151.500 5V21.500L146 17H142.500ZM154.500 10Q157 13 154.500 17M158 7.500Q161.500 13 158 19.500" strokeWidth="1.300" />
          <path d="M161 5Q166 13 161 22" stroke="#777" strokeWidth="1.200" />
        </svg>
        <div className="ml-[8px] flex w-[96px] flex-col items-center text-[17.800px] leading-[28px] tracking-[-0.400px] text-white">
          <span>2:06 PM</span>
          <span>2/13/2021</span>
        </div>
        <svg className="ml-[23px] h-[40px] w-[40px]" viewBox="0 0 40 40">
          <path d="M0 0H24V19H10L5 24V19H0Z" transform="translate(0 3)" fill="#fff" />
          <path d="M5 9H19M5 13H19M5 17H14" stroke="#222" strokeWidth="1" />
          <rect x="8.500" y="15" width="29" height="24" rx="12" fill="#55575a" fillOpacity=".85" stroke="#999" />
          <text x="23" y="33" textAnchor="middle" fill="#fff" className="text-[16.500px] font-bold">20</text>
        </svg>
        <div className="ml-[14px] mr-[6px] h-[60px] w-[2px] bg-[#7a7a7a]" />
      </div>
    </div>
  );
}

export default function App() {
  return (
    <div className="flex h-[2160px] w-[3840px] flex-col overflow-hidden bg-[#222] font-['Open_Sans',sans-serif]">
      <TabStrip />
      <Toolbar />
      <div className="flex grow flex-col font-['Lato',sans-serif] text-white">
        <header className="flex h-[124px] items-center bg-[#375a7f] pb-[9px] pl-[48px]">
          <h1 className="text-[48px] leading-none tracking-[-0.06px] underline decoration-[4px] underline-offset-[4px]">Let's look at some earthquake data!</h1>
        </header>
        <FilterCard />
        <h1 className="ml-[18px] mt-[36px] flex h-[84px] items-center whitespace-nowrap pb-[3px] text-[57.6px] leading-none tracking-[-0.215px]">
          This represents all earthquakes recorded by the USGS for the 7Days | Earthquakes within the past 7 days.
        </h1>
        <MapPanel />
        <footer className="ml-[1610px] mt-[17px] flex h-[30px] items-center whitespace-nowrap text-[24px]">
          <span className="tracking-[-0.95px]">Created by someone who does not know how to code</span>
          <Woozy />
          <span className="tracking-[1px]">©™®</span>
        </footer>
      </div>
      <Taskbar />
    </div>
  );
}
